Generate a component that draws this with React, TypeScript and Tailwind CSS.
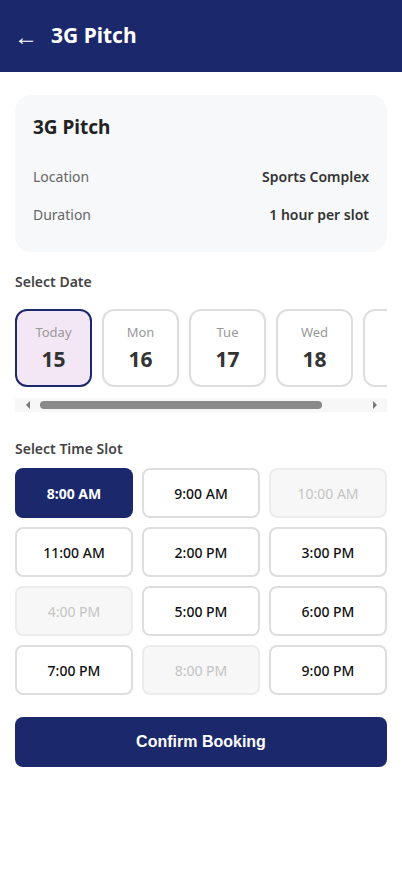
import React from "react";

const dates = [
  { d: "Today", n: "15", sel: true },
  { d: "Mon", n: "16" },
  { d: "Tue", n: "17" },
  { d: "Wed", n: "18" },
  { d: "", n: "" },
];

const slots: { t: string; s?: "sel" | "dis" }[] = [
  { t: "8:00 AM", s: "sel" },
  { t: "9:00 AM" },
  { t: "10:00 AM", s: "dis" },
  { t: "11:00 AM" },
  { t: "2:00 PM" },
  { t: "3:00 PM" },
  { t: "4:00 PM", s: "dis" },
  { t: "5:00 PM" },
  { t: "6:00 PM" },
  { t: "7:00 PM" },
  { t: "8:00 PM", s: "dis" },
  { t: "9:00 PM" },
];

export default function App() {
  return (
    <div
      className="w-[402px] min-h-[874px] bg-white text-[#333]"
      style={{ fontFamily: '"Noto Sans", "Open Sans", sans-serif' }}
    >
      <header className="h-[72px] bg-[#1b286c] flex items-center pl-[14px] gap-[13px] text-white">
        <span className="text-[24px] leading-none">←</span>
        <h1 className="text-[21px] font-bold">3G Pitch</h1>
      </header>

      <div className="px-[15px] pt-[23px]">
        <div className="bg-[#f7f8fa] rounded-[16px] px-[18px] pt-[18px] pb-[18px] h-[157px]">
          <h2 className="text-[19px] font-bold text-[#222] leading-[28px]">3G Pitch</h2>
          <div className="mt-[25px] flex justify-between text-[14px] leading-[22px]">
            <span className="text-[#666]">Location</span>
            <span className="font-semibold text-[#333]">Sports Complex</span>
          </div>
          <div className="mt-[16px] flex justify-between text-[14px] leading-[22px]">
            <span className="text-[#666]">Duration</span>
            <span className="font-semibold text-[#333]">1 hour per slot</span>
          </div>
        </div>

        <h3 className="mt-[19px] text-[14px] font-semibold text-[#444] leading-[22px]">Select Date</h3>
        <div className="mt-[16px] overflow-hidden">
          <div className="flex gap-[10px]">
            {dates.map((x, i) => (
              <div
                key={i}
                className={`shrink-0 w-[77px] h-[78px] rounded-[12px] border-2 flex flex-col items-center justify-center ${
                  x.sel ? "bg-[#f3e6f5] border-[#1b286c]" : "bg-white border-[#dedede]"
                }`}
              >
                <span className="text-[13px] text-[#999] leading-[18px]">{x.d}</span>
                <span className="mt-[3px] text-[21px] font-bold text-[#333] leading-[30px]">{x.n}</span>
              </div>
            ))}
          </div>
        </div>
        <div className="mt-[11px] h-[14px] bg-[#f7f7f7] flex items-center">
          <div className="w-[25px] flex justify-center">
            <div className="w-0 h-0 border-y-[4px] border-y-transparent border-r-[4px] border-r-[#777]" />
          </div>
          <div className="flex-1 flex items-center">
            <div className="w-[282px] h-[8px] rounded-full bg-[#8a8a8a]" />
          </div>
          <div className="w-[24px] flex justify-center">
            <div className="w-0 h-0 border-y-[4px] border-y-transparent border-l-[4px] border-l-[#777]" />
          </div>
        </div>

        <h3 className="mt-[26px] text-[14px] font-semibold text-[#444] leading-[22px]">Select Time Slot</h3>
        <div className="mt-[8px] grid grid-cols-3 gap-x-[9px] gap-y-[9px]">
          {slots.map((s, i) => (
            <div
              key={i}
              className={`h-[50px] rounded-[8px] flex items-center justify-center text-[14px] ${
                s.s === "sel"
                  ? "bg-[#1b286c] text-white font-bold"
                  : s.s === "dis"
                  ? "bg-[#f7f7f7] border-2 border-[#ececec] text-[#c4c4c4]"
                  : "bg-white border-2 border-[#dedede] text-[#111] font-medium"
              }`}
            >
              {s.t}
            </div>
          ))}
        </div>

        <button
          className="mt-[22px] w-full h-[50px] rounded-[8px] bg-[#1b286c] text-white text-[16px] font-bold"
          style={{ fontFamily: '"Liberation Sans", Arial, sans-serif' }}
        >
          Confirm Booking
        </button>
      </div>
    </div>
  );
}
